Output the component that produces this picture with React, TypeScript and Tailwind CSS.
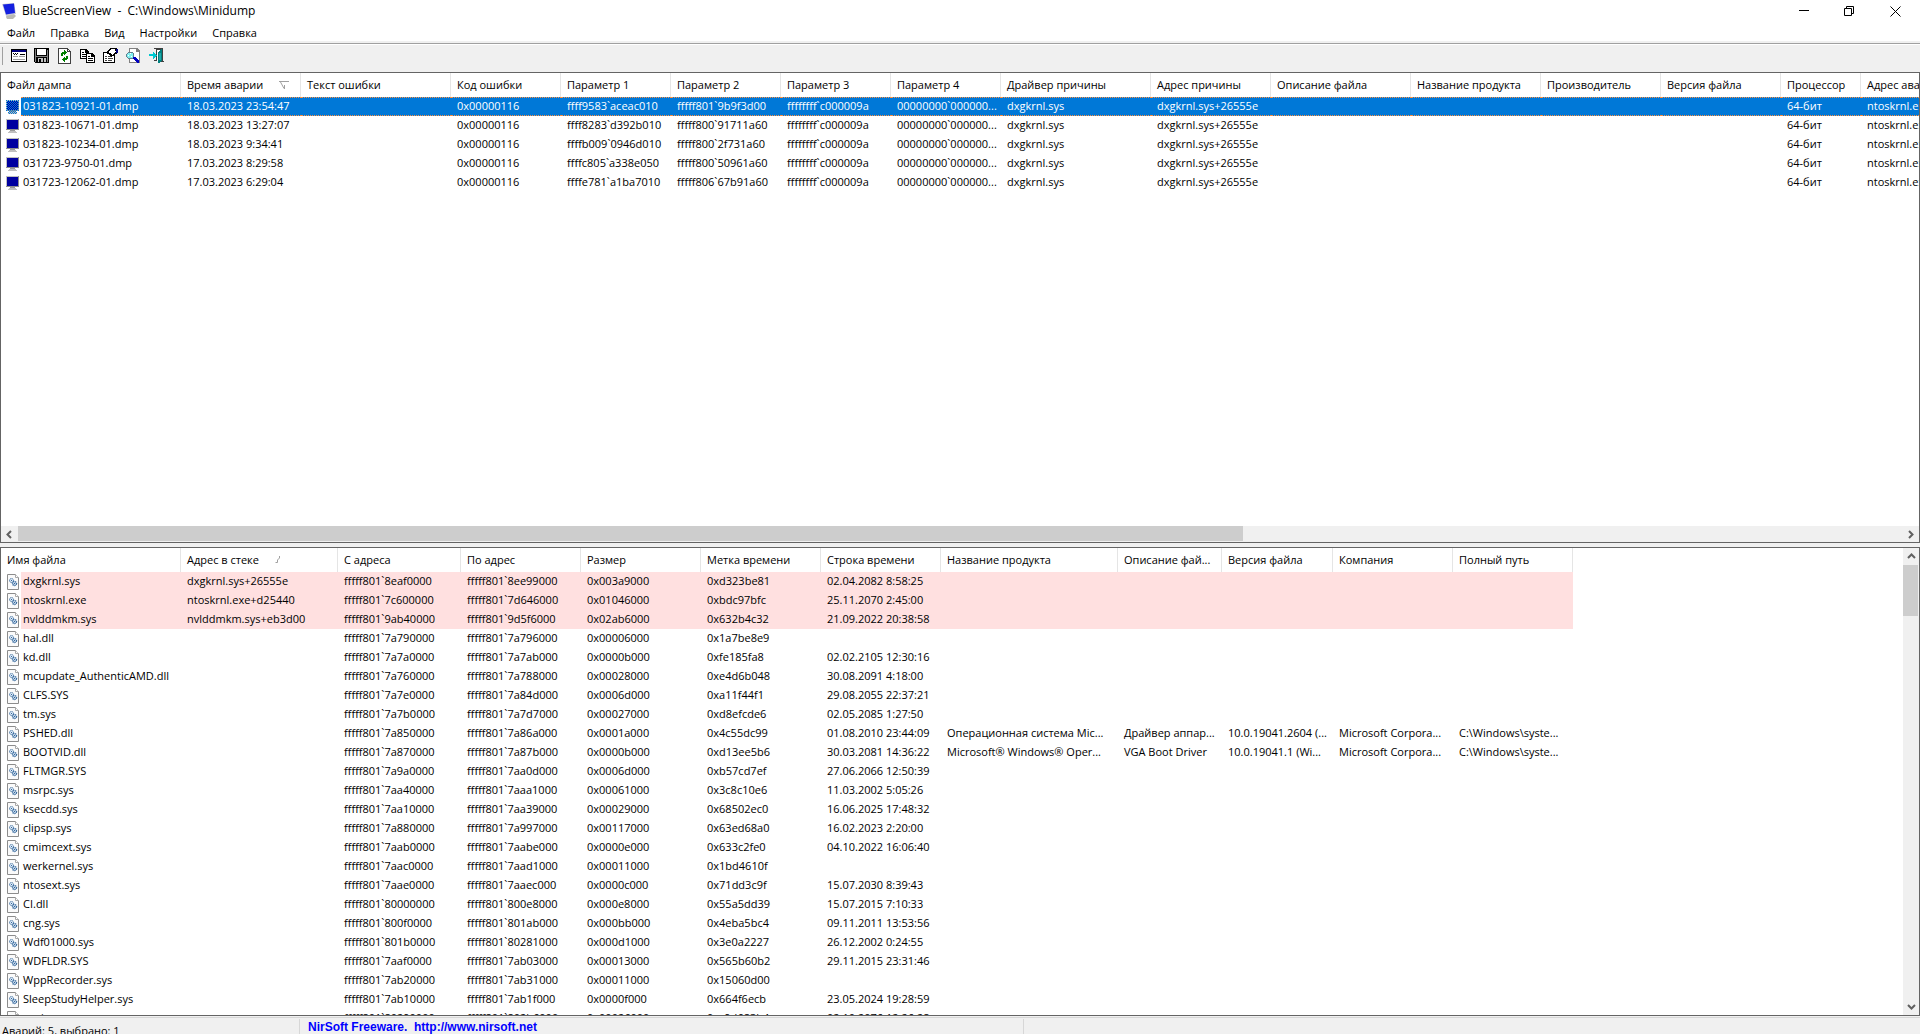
import { useState } from "react";
import type { ReactNode } from "react";
import clsx from "clsx";

interface Column {
  label: string;
  width: number;
  sort?: "asc" | "desc";
}

const menuItems = ["Файл", "Правка", "Вид", "Настройки", "Справка"];

const dumpColumns: Column[] = [
  { label: "Файл дампа", width: 180 },
  { label: "Время аварии", width: 120, sort: "desc" },
  { label: "Текст ошибки", width: 150 },
  { label: "Код ошибки", width: 110 },
  { label: "Параметр 1", width: 110 },
  { label: "Параметр 2", width: 110 },
  { label: "Параметр 3", width: 110 },
  { label: "Параметр 4", width: 110 },
  { label: "Драйвер причины", width: 150 },
  { label: "Адрес причины", width: 120 },
  { label: "Описание файла", width: 140 },
  { label: "Название продукта", width: 130 },
  { label: "Производитель", width: 120 },
  { label: "Версия файла", width: 120 },
  { label: "Процессор", width: 80 },
  { label: "Адрес аварии", width: 120 },
];

const dumps = [
  ["031823-10921-01.dmp", "18.03.2023 23:54:47", "ffff9583`aceac010", "fffff801`9b9f3d00"],
  ["031823-10671-01.dmp", "18.03.2023 13:27:07", "ffff8283`d392b010", "fffff800`91711a60"],
  ["031823-10234-01.dmp", "18.03.2023 9:34:41", "ffffb009`0946d010", "fffff800`2f731a60"],
  ["031723-9750-01.dmp", "17.03.2023 8:29:58", "ffffc805`a338e050", "fffff800`50961a60"],
  ["031723-12062-01.dmp", "17.03.2023 6:29:04", "ffffe781`a1ba7010", "fffff806`67b91a60"],
].map(([file, time, param1, param2]) => [
  file,
  time,
  "",
  "0x00000116",
  param1,
  param2,
  "ffffffff`c000009a",
  "00000000`000000...",
  "dxgkrnl.sys",
  "dxgkrnl.sys+26555e",
  "",
  "",
  "",
  "",
  "64-бит",
  "ntoskrnl.exe+3fa090",
]);

const driverColumns: Column[] = [
  { label: "Имя файла", width: 180 },
  { label: "Адрес в стеке", width: 157, sort: "asc" },
  { label: "С адреса", width: 123 },
  { label: "По адрес", width: 120 },
  { label: "Размер", width: 120 },
  { label: "Метка времени", width: 120 },
  { label: "Строка времени", width: 120 },
  { label: "Название продукта", width: 177 },
  { label: "Описание фай...", width: 104 },
  { label: "Версия файла", width: 111 },
  { label: "Компания", width: 120 },
  { label: "Полный путь", width: 120 },
];

const drivers = [
  ["dxgkrnl.sys", "dxgkrnl.sys+26555e", "fffff801`8eaf0000", "fffff801`8ee99000", "0x003a9000", "0xd323be81", "02.04.2082 8:58:25"],
  ["ntoskrnl.exe", "ntoskrnl.exe+d25440", "fffff801`7c600000", "fffff801`7d646000", "0x01046000", "0xbdc97bfc", "25.11.2070 2:45:00"],
  ["nvlddmkm.sys", "nvlddmkm.sys+eb3d00", "fffff801`9ab40000", "fffff801`9d5f6000", "0x02ab6000", "0x632b4c32", "21.09.2022 20:38:58"],
  ["hal.dll", "", "fffff801`7a790000", "fffff801`7a796000", "0x00006000", "0x1a7be8e9", ""],
  ["kd.dll", "", "fffff801`7a7a0000", "fffff801`7a7ab000", "0x0000b000", "0xfe185fa8", "02.02.2105 12:30:16"],
  ["mcupdate_AuthenticAMD.dll", "", "fffff801`7a760000", "fffff801`7a788000", "0x00028000", "0xe4d6b048", "30.08.2091 4:18:00"],
  ["CLFS.SYS", "", "fffff801`7a7e0000", "fffff801`7a84d000", "0x0006d000", "0xa11f44f1", "29.08.2055 22:37:21"],
  ["tm.sys", "", "fffff801`7a7b0000", "fffff801`7a7d7000", "0x00027000", "0xd8efcde6", "02.05.2085 1:27:50"],
  ["PSHED.dll", "", "fffff801`7a850000", "fffff801`7a86a000", "0x0001a000", "0x4c55dc99", "01.08.2010 23:44:09", "Операционная система Mic...", "Драйвер аппар...", "10.0.19041.2604 (...", "Microsoft Corpora...", "C:\\Windows\\syste..."],
  ["BOOTVID.dll", "", "fffff801`7a870000", "fffff801`7a87b000", "0x0000b000", "0xd13ee5b6", "30.03.2081 14:36:22", "Microsoft® Windows® Oper...", "VGA Boot Driver", "10.0.19041.1 (Wi...", "Microsoft Corpora...", "C:\\Windows\\syste..."],
  ["FLTMGR.SYS", "", "fffff801`7a9a0000", "fffff801`7aa0d000", "0x0006d000", "0xb57cd7ef", "27.06.2066 12:50:39"],
  ["msrpc.sys", "", "fffff801`7aa40000", "fffff801`7aaa1000", "0x00061000", "0x3c8c10e6", "11.03.2002 5:05:26"],
  ["ksecdd.sys", "", "fffff801`7aa10000", "fffff801`7aa39000", "0x00029000", "0x68502ec0", "16.06.2025 17:48:32"],
  ["clipsp.sys", "", "fffff801`7a880000", "fffff801`7a997000", "0x00117000", "0x63ed68a0", "16.02.2023 2:20:00"],
  ["cmimcext.sys", "", "fffff801`7aab0000", "fffff801`7aabe000", "0x0000e000", "0x633c2fe0", "04.10.2022 16:06:40"],
  ["werkernel.sys", "", "fffff801`7aac0000", "fffff801`7aad1000", "0x00011000", "0x1bd4610f", ""],
  ["ntosext.sys", "", "fffff801`7aae0000", "fffff801`7aaec000", "0x0000c000", "0x71dd3c9f", "15.07.2030 8:39:43"],
  ["CI.dll", "", "fffff801`80000000", "fffff801`800e8000", "0x000e8000", "0x55a5dd39", "15.07.2015 7:10:33"],
  ["cng.sys", "", "fffff801`800f0000", "fffff801`801ab000", "0x000bb000", "0x4eba5bc4", "09.11.2011 13:53:56"],
  ["Wdf01000.sys", "", "fffff801`801b0000", "fffff801`80281000", "0x000d1000", "0x3e0a2227", "26.12.2002 0:24:55"],
  ["WDFLDR.SYS", "", "fffff801`7aaf0000", "fffff801`7ab03000", "0x00013000", "0x565b60b2", "29.11.2015 23:31:46"],
  ["WppRecorder.sys", "", "fffff801`7ab20000", "fffff801`7ab31000", "0x00011000", "0x15060d00", ""],
  ["SleepStudyHelper.sys", "", "fffff801`7ab10000", "fffff801`7ab1f000", "0x0000f000", "0x664f6ecb", "23.05.2024 19:28:59"],
  ["acpiex.sys", "", "fffff801`80290000", "fffff801`802b6000", "0x00026000", "0xc9d683b4", "02.10.2076 12:26:28"],
];

function Icon({ children }: { children: ReactNode }) {
  return (
    <svg width="16" height="16" viewBox="0 0 16 16" shapeRendering="crispEdges" className="shrink-0" aria-hidden="true">
      {children}
    </svg>
  );
}

function AppIcon() {
  return (
    <svg width="16" height="16" viewBox="0 0 16 16" className="shrink-0" aria-hidden="true">
      <path d="M5 11l6-1 3 3-3 3H5l-1-2z" fill="#b9b9b4" />
      <path d="M0 1l12-1 2 11-10 2z" fill="#c9c9d2" />
      <path d="M1 1.500L12 .5l1 9.500-9 1.500z" fill="#1420e0" />
    </svg>
  );
}

function MonitorIcon({ selected }: { selected?: boolean }) {
  return (
    <Icon>
      <path d="M1 1h13v11H1z" fill="#c0c0c0" />
      <path d="M1 12h13V1h-1v10H1z" fill="#8f8f8f" />
      <path d="M2 2h11v9H2z" fill="#0000a0" />
      <path d="M5 12h5v1H5z" fill="#9a9a9a" />
      <path d="M3 14h9v1H3zM4 13h7v1H4z" fill="#c0c0c0" />
      {selected && (
        <>
          <defs>
            <pattern id="dither" width="2" height="2" patternUnits="userSpaceOnUse">
              <path d="M0 0h1v1H0zM1 1h1v1H1z" fill="#0078d7" />
            </pattern>
          </defs>
          <path d="M1 1h13v11h-2v3H3v-3H1z" fill="url(#dither)" />
        </>
      )}
    </Icon>
  );
}

function DriverIcon() {
  return (
    <svg width="16" height="16" viewBox="0 0 16 16" className="shrink-0" aria-hidden="true">
      <path d="M2.500 .5h8l3 3v12h-11z" fill="#fafafa" stroke="#8c8c8c" />
      <path d="M10.500 .5v3h3" fill="#fff" stroke="#a8a8a8" />
      <circle cx="6.500" cy="6.500" r="2" fill="#dbe8f5" stroke="#35689c" strokeDasharray="1.200 .6" />
      <circle cx="9.500" cy="9.500" r="2" fill="#dbe8f5" stroke="#35689c" strokeWidth="1.400" strokeDasharray="1.200 .6" />
      <path d="M6 6h1v1H6zM9 9h1v1H9z" fill="#35689c" />
    </svg>
  );
}

function SortMark({ direction }: { direction: "asc" | "desc" }) {
  return (
    <svg width="12" height="8" viewBox="0 0 12 8" fill="none" stroke="#a0a0a0" className="shrink-0" aria-hidden="true">
      {direction === "desc" ? <path d="M0 .5h10M1.500 1l3.500 6.500M5.500 4v4" /> : <path d="M.5 6.500h2V4l2-2V0" />}
    </svg>
  );
}

const toolbarItems = [
  {
    title: "Свойства",
    icon: (
      <Icon>
        <path d="M0 1h16v13H0z" />
        <path d="M1 4h14v9H1z" fill="#fff" />
        <path d="M1 2h14v2H1z" fill="#000080" />
        <path d="M2 5h1v1H2zM4 5h1v1H4zM6 5h1v1H6zM3 6h1v1H3zM5 6h1v1H5zM9 6h5v1H9z" />
        <path d="M2 8h5v1H2zM2 11h12v1H2zM8 8h6v1H8z" fill="#a0a0a0" />
      </Icon>
    ),
  },
  {
    title: "Сохранить",
    icon: (
      <Icon>
        <path d="M0 0h15v15H1l-1-1z" />
        <path d="M1 1h1v13H1zM13 2h1v12h-1zM2 8h11v1H2z" fill="#808080" />
        <path d="M3 1h9v6H3z" fill="#fff" />
        <path d="M4 10h8v4H4z" fill="#c0c0c0" />
        <path d="M5 11h2v3H5zM9 10h1v4H9z" />
      </Icon>
    ),
  },
  {
    title: "Обновить",
    icon: (
      <Icon>
        <path d="M1 0h9l4 4v12H1z" fill="#404040" />
        <path d="M2 1h8v3h3v11H2z" fill="#fff" />
        <path d="M11 2l1 1h-1z" fill="#fff" />
        <path d="M4 8V5h1V4h2V2h1v1h1v1h1v1H9v1H8v1H7V6H6v2zM11 8v3h-1v1H8v2H7v-1H6v-1H5v-1h1v-1h1V9h1v1h1V8z" fill="#008000" />
      </Icon>
    ),
  },
  {
    title: "Копировать",
    icon: (
      <Icon>
        <path d="M0 1h6l3 3v7H0z" />
        <path d="M1 2h4v3h3v5H1z" fill="#fff" />
        <path d="M2 4h2v1H2zM2 6h5v1H2zM2 8h5v1H2z" />
        <path d="M6 5h6l3 3v7H6z" />
        <path d="M7 6h4v3h3v5H7z" fill="#fff" />
        <path d="M8 8h2v1H8zM8 10h5v1H8zM8 12h5v1H8z" />
      </Icon>
    ),
  },
  {
    title: "Параметры",
    icon: (
      <Icon>
        <path d="M0 4h12v11H0z" />
        <path d="M1 5h10v9H1z" fill="#fff" />
        <path d="M2 8h2v1H2zM5 8h4v1H5zM2 10h2v1H2zM5 10h5v1H5zM2 12h2v1H2zM5 12h4v1H5z" fill="#404040" />
        <path d="M3 5l2-3 3-2h5l2 2v3l-2 1-3 2-2 1-1-2z" />
        <path d="M5 4l3-3h4l1 3-4 3-1-2H6z" fill="#fff" />
        <path d="M13 1h2v4h-2z" fill="#000080" />
      </Icon>
    ),
  },
  {
    title: "Найти",
    icon: (
      <Icon>
        <path d="M3 0h8l3 3v12H3z" fill="#808080" />
        <path d="M4 1h6v3h3v10H4z" fill="#fff" />
        <path d="M2 4h4l2 2v3l-2 2H2L0 9V6z" fill="#608090" />
        <path d="M2 5h4l1 1v3l-1 1H2L1 9V6z" fill="#80f0f0" />
        <path d="M4 5h1v1H4zM2 7h1v1H2zM5 8h1v1H5z" fill="#fff" />
        <path d="M7 9h2l4 4v2h-2l-4-4z" fill="#0000c0" />
      </Icon>
    ),
  },
  {
    title: "Выход",
    icon: (
      <Icon>
        <path d="M5 0h9v13h1v1H9v-1H5v-1h2V1H5z" fill="#404040" />
        <path d="M8 2h3v11H8z" fill="#fff" />
        <path d="M9 4l4-3v11l-3 3H9z" fill="#008080" />
        <path d="M10 5h2v7h-2z" fill="#20a8a8" />
        <path d="M0 6h4V4l4 3-4 4V8H0z" fill="#00c8d0" />
      </Icon>
    ),
  },
];

const arrowPaths = {
  left: "M6 1L2.500 4.500 6 8",
  right: "M3 1l3.500 3.500L3 8",
  up: "M1 6l3.500-3.500L8 6",
  down: "M1 3l3.500 3.500L8 3",
};

function ScrollButton({ direction }: { direction: keyof typeof arrowPaths }) {
  return (
    <button aria-label={direction} className="flex size-[17px] shrink-0 items-center justify-center">
      <svg width="9" height="9" viewBox="0 0 9 9" fill="none" stroke="#606060" strokeWidth="2">
        <path d={arrowPaths[direction]} />
      </svg>
    </button>
  );
}

interface ListViewProps {
  columns: Column[];
  rows: string[][];
  icon: (index: number) => ReactNode;
  selected?: number;
  highlighted?: number;
  onSelect?: (index: number) => void;
}

function ListView({ columns, rows, icon, selected = -1, highlighted = 0, onSelect }: ListViewProps) {
  const total = columns.reduce((sum, column) => sum + column.width, 0);

  return (
    <table className="table-fixed border-separate border-spacing-0 text-left" style={{ width: total }}>
      <colgroup>
        {columns.map((column) => (
          <col key={column.label} style={{ width: column.width }} />
        ))}
      </colgroup>
      <thead>
        <tr className="h-6">
          {columns.map((column) => (
            <th key={column.label} className="overflow-hidden border-r border-[#e5e5e5] px-1.5 py-0 font-normal whitespace-nowrap">
              <div className="flex items-center gap-4">
                {column.label}
                {column.sort && <SortMark direction={column.sort} />}
              </div>
            </th>
          ))}
        </tr>
      </thead>
      <tbody>
        {rows.map((row, index) => {
          const fill = clsx(
            "border-y",
            index === selected && "border-dotted border-[#ff9040] bg-[#0078d7] text-white",
            index !== selected && "border-transparent",
            index < highlighted && "bg-[#ffe0e0]"
          );
          return (
            <tr key={row[0]} className="h-[19px]" onClick={() => onSelect?.(index)}>
              {columns.map((column, cell) =>
                cell === 0 ? (
                  <td key={column.label} className="p-0">
                    <div className="flex h-[19px] items-center pl-1">
                      {icon(index)}
                      <span className={clsx("h-full grow pl-0.5 leading-4 whitespace-nowrap", fill)}>{row[0]}</span>
                    </div>
                  </td>
                ) : (
                  <td key={column.label} className={clsx("overflow-hidden px-1.5 pt-0 pb-px leading-4 whitespace-nowrap", fill)}>
                    {row[cell]}
                  </td>
                )
              )}
            </tr>
          );
        })}
      </tbody>
    </table>
  );
}

export default function App() {
  const [selected, setSelected] = useState(0);

  return (
    <div className="flex h-screen flex-col overflow-hidden bg-[#f0f0f0] font-['Open_Sans','Noto_Sans',sans-serif] text-[11px] leading-4 text-black">
      <header className="bg-white">
        <div className="flex h-6 items-center px-0.5 pb-0.5">
          <AppIcon />
          <h1 className="grow pl-1 text-xs whitespace-pre">BlueScreenView  -  C:\Windows\Minidump</h1>
          <button aria-label="Свернуть" className="flex h-full w-[46px] items-center justify-center">
            <svg width="11" height="11" fill="none" stroke="#000">
              <path d="M1 4.500h10" />
            </svg>
          </button>
          <button aria-label="Восстановить" className="flex h-full w-[46px] items-center justify-center">
            <svg width="11" height="11" fill="none" stroke="#000">
              <path d="M.5 2.500h7v7h-7zM2.500 2V.5h7v7H8" />
            </svg>
          </button>
          <button aria-label="Закрыть" className="flex h-full w-[46px] items-center justify-center">
            <svg width="11" height="11" fill="none" stroke="#000">
              <path d="M.5 .5l10 10M10.500 .5l-10 10" />
            </svg>
          </button>
        </div>
        <nav className="flex h-[17px] items-center gap-[15px] pl-[7px]">
          {menuItems.map((item) => (
            <button key={item}>{item}</button>
          ))}
        </nav>
      </header>

      <div className="mt-0.5 flex h-[29px] shrink-0 items-center gap-2 border-t border-[#a0a0a0] pb-1 pl-0.5 shadow-[inset_0_1px_#fff]">
        <span className="h-[18px] w-px bg-[#a0a0a0]" />
        <div className="flex gap-[7px]">
          {toolbarItems.map((item) => (
            <button key={item.title} title={item.title}>
              {item.icon}
            </button>
          ))}
        </div>
      </div>

      <section className="flex min-h-0 flex-[471_1_0%] flex-col border border-[#646464] bg-white">
        <div className="min-h-0 grow overflow-hidden">
          <ListView
            columns={dumpColumns}
            rows={dumps}
            icon={(index) => <MonitorIcon selected={index === selected} />}
            selected={selected}
            onSelect={setSelected}
          />
        </div>
        <div className="flex h-4 shrink-0 items-start overflow-hidden bg-[#f0f0f0]">
          <ScrollButton direction="left" />
          <div className="flex grow">
            <div className="h-[15px] w-[65%] bg-[#cdcdcd]" />
          </div>
          <ScrollButton direction="right" />
        </div>
      </section>

      <section className="mt-1 flex min-h-0 flex-[469_1_0%] border border-[#646464] bg-white">
        <div className="min-w-0 grow overflow-hidden">
          <ListView columns={driverColumns} rows={drivers} icon={() => <DriverIcon />} highlighted={3} />
        </div>
        <div className="flex w-4 shrink-0 flex-col bg-[#f0f0f0]">
          <ScrollButton direction="up" />
          <div className="grow">
            <div className="h-[51px] w-[15px] bg-[#cdcdcd]" />
          </div>
          <ScrollButton direction="down" />
        </div>
      </section>

      <footer className="mt-px flex h-[17px] shrink-0 overflow-hidden border-t border-[#d7d7d7]">
        <div className="mt-px w-[300px] border-r border-[#d7d7d7] pt-1 pl-0.5">Аварий: 5, выбрано: 1</div>
        <div className="mt-px w-[724px] border-r border-[#d7d7d7] pl-2 font-['Liberation_Sans',sans-serif] text-xs font-bold text-[#0000ff]">
          <a href="http://www.nirsoft.net" className="whitespace-pre">
            NirSoft Freeware.  http://www.nirsoft.net
          </a>
        </div>
      </footer>
    </div>
  );
}
